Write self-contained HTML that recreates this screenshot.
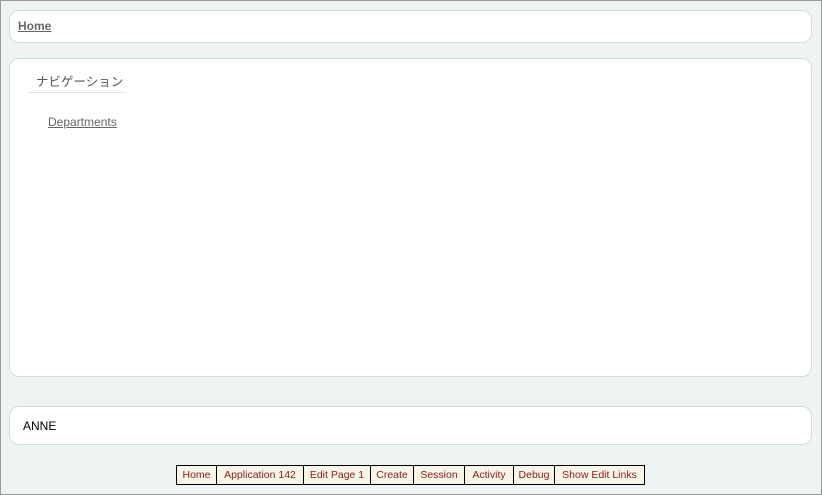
<!DOCTYPE html><html><head><style>
body{margin:0;width:822px;height:495px;overflow:hidden;font-family:"Liberation Sans","Noto Sans CJK JP",sans-serif}
.pg{position:absolute;left:0;top:0;width:820px;height:493px;border:1px solid #9a9a9a;background:#eef4f3}
.p{position:absolute;left:8px;width:801px;background:#fff;border:1px solid #d3dcdc;border-radius:10px}
a{color:#666;text-decoration:underline}
.tb{position:absolute;top:464px;left:175px;height:18px;border:1px solid #000;display:flex;background:#f7f6e6}
.tb span{border-left:1px solid #000;font-size:10.5px;color:#8b1a1a;line-height:18px;text-align:center;box-sizing:border-box;white-space:nowrap}
.tb span:first-child{border-left:none}
</style></head><body><div class="pg">
<div class="p" style="top:9px;height:31px"><a style="position:absolute;left:8px;top:8px;font-size:12px;font-weight:bold">Home</a></div>
<div class="p" style="top:57px;height:317px">
<div style="position:absolute;left:18px;top:12px;width:97px;border-bottom:1px solid #dde3e3;font-size:12.5px;color:#555;padding:0 0 2px 8px;box-sizing:border-box;white-space:nowrap">ナビゲーション</div>
<a style="position:absolute;left:38px;top:56px;font-size:12px">Departments</a></div>
<div class="p" style="top:405px;height:37px"><div style="position:absolute;left:13px;top:12px;font-size:12px;color:#000">ANNE</div></div>
<div class="tb"><span style="width:39px">Home</span><span style="width:87px">Application 142</span><span style="width:67px">Edit Page 1</span><span style="width:43px">Create</span><span style="width:51px">Session</span><span style="width:49px">Activity</span><span style="width:41px">Debug</span><span style="width:90px">Show Edit Links</span></div>
</div></body></html>
